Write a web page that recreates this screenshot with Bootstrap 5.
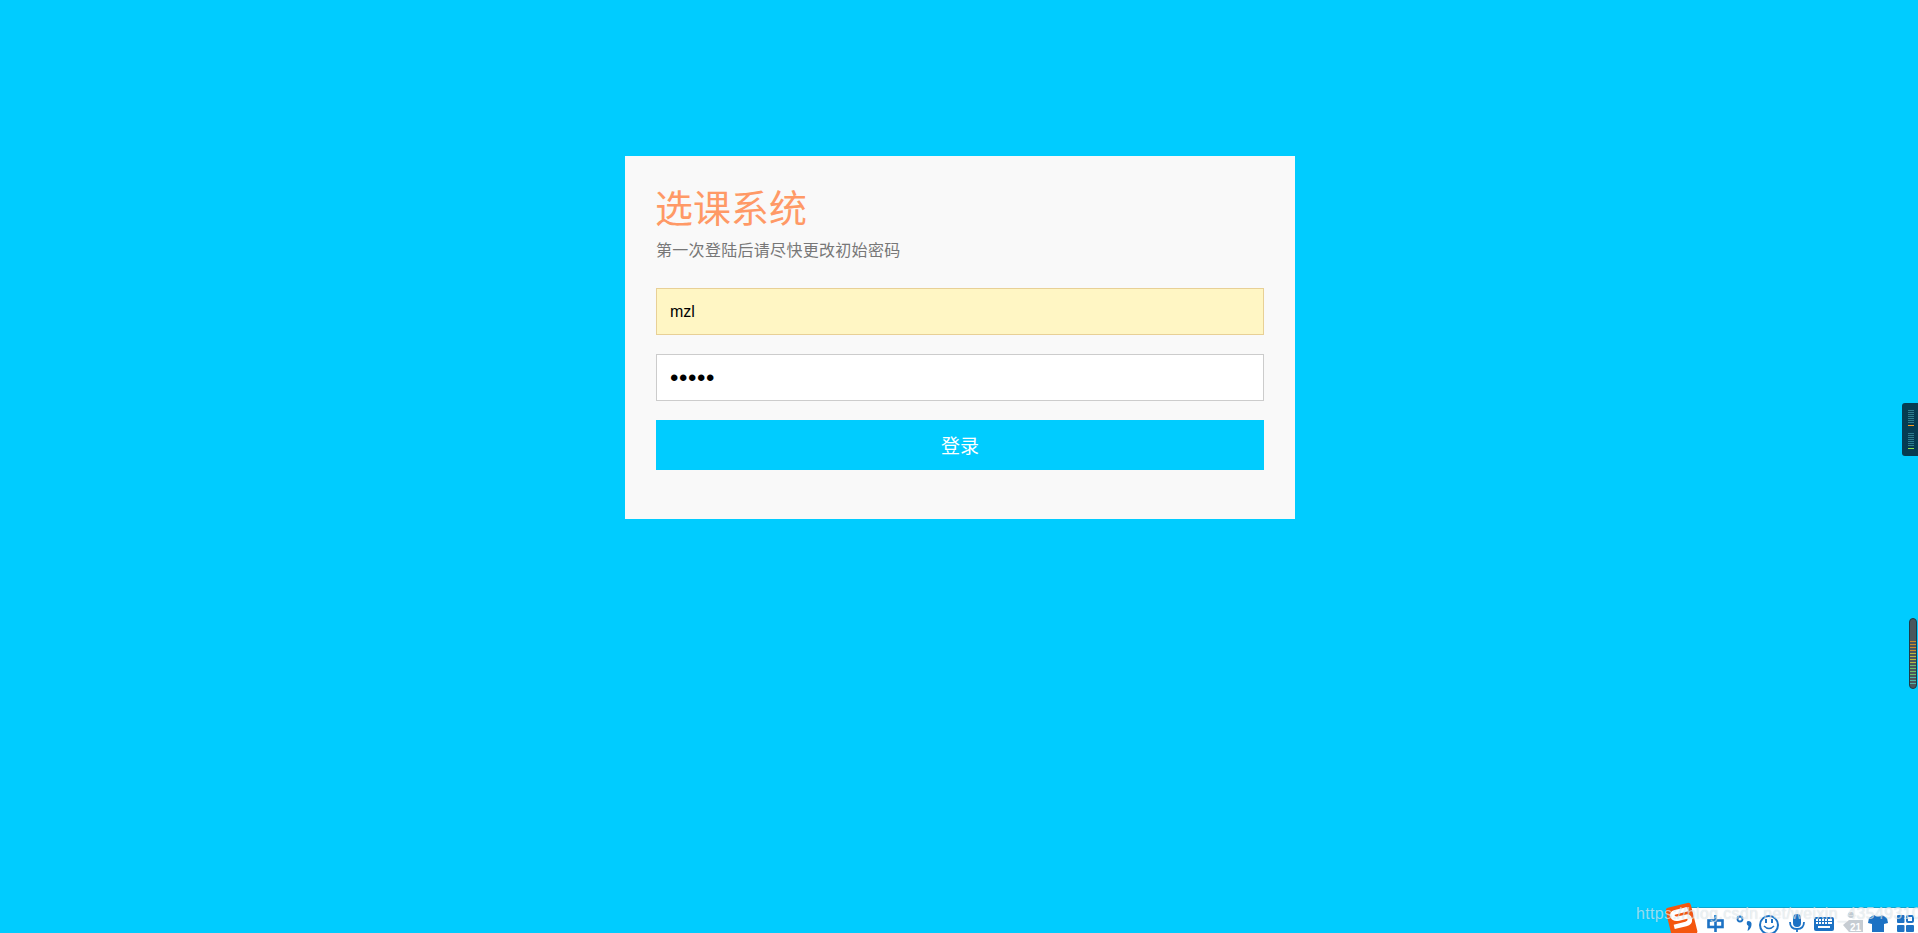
<!DOCTYPE html>
<html lang="zh-CN">
<head>
    <meta charset="UTF-8">
    <meta name="viewport" content="width=device-width, initial-scale=1.0">
    <title>选课系统</title>
    <link href="https://cdn.jsdelivr.net/npm/bootstrap@5.3.3/dist/css/bootstrap.min.css" rel="stylesheet">
    <style>
        html, body { height: 100%; }
        body {
            background: #00ccff;
            overflow: hidden;
            font-family: "Liberation Sans", "Noto Sans CJK SC", sans-serif;
        }
        .login-box {
            width: 670px;
            height: 363px;
            margin: 156px 0 0 625px;
            padding: 25px 31px 0;
            background: #f9f9f9;
        }
        .login-title {
            color: #ff9966;
            font-size: 38px;
            line-height: 50px;
            font-weight: 400;
            margin: 0 0 7px -1px;
            font-family: "Noto Sans CJK SC", sans-serif;
        }
        .login-sub {
            color: #777;
            font-size: 16px;
            line-height: 24px;
            letter-spacing: .3px;
            margin: -1px 0 27px;
            font-family: "Noto Sans CJK SC", sans-serif;
        }
        .login-input.form-control {
            height: 47px;
            padding: 0 13px;
            font-size: 16px;
            color: #000;
            border: 1px solid #ccc;
            border-radius: 0;
            background: #fff;
            margin-bottom: 19px;
        }
        .login-input.is-filled { background: #fff6c4; border-color: #e8d096; }
        .login-input.is-secret { font-size: 24px; letter-spacing: .6px; }
        .login-btn.btn {
            display: block;
            width: 100%;
            height: 50px;
            background: #00ccff;
            color: #fff;
            font-size: 19px;
            border: 0;
            border-radius: 0;
            font-family: "Noto Sans CJK SC", sans-serif;
        }
        /* desktop bits lying over the page */
        .side-meter {
            position: absolute;
            right: 0;
            top: 403px;
            width: 16px;
            height: 53px;
            background: #063c52;
            border-radius: 3px 0 0 3px;
        }
        .side-bar {
            position: absolute;
            right: 1px;
            top: 618px;
            width: 8px;
            height: 71px;
            background: #4a565c;
            border: 1px solid #1d3a48;
            border-radius: 4px;
        }
        .ime-bar {
            position: absolute;
            right: 0;
            bottom: 0;
            width: 228px;
            height: 26px;
            background: #fff;
            border-top: 1px solid #0ea5cf;
        }
        .ime-icons { position: absolute; right: 0; bottom: 0; }
        .watermark {
            position: absolute;
            left: 1636px;
            top: 902px;
            font-size: 16px;
            line-height: 24px;
            letter-spacing: .35px;
            color: rgba(255, 255, 255, .6);
            text-shadow: 0 0 1px rgba(0, 60, 90, .22);
            white-space: nowrap;
        }
    </style>
</head>
<body>

    <div class="login-box">
        <h1 class="login-title">选课系统</h1>
        <p class="login-sub">第一次登陆后请尽快更改初始密码</p>
        <form onsubmit="return false">
            <input type="text" class="form-control login-input is-filled" value="mzl">
            <input type="password" class="form-control login-input is-secret" value="12345">
            <button type="submit" class="btn login-btn">登录</button>
        </form>
    </div>

    <div class="side-meter">
        <svg class="d-block" width="16" height="53" viewBox="0 0 16 53">
            <g fill="#2f7d8f">
                <rect x="6" y="7" width="6" height="1"/><rect x="6" y="9" width="6" height="1"/>
                <rect x="6" y="11" width="6" height="1"/><rect x="6" y="13" width="6" height="1"/>
                <rect x="6" y="15" width="6" height="1"/><rect x="6" y="17" width="6" height="1"/>
                <rect x="6" y="19" width="6" height="1"/>
                <rect x="6" y="30" width="6" height="1"/><rect x="6" y="32" width="6" height="1"/>
                <rect x="6" y="34" width="6" height="1"/><rect x="6" y="36" width="6" height="1"/>
                <rect x="6" y="38" width="6" height="1"/><rect x="6" y="40" width="6" height="1"/>
                <rect x="6" y="42" width="6" height="1"/>
            </g>
            <rect x="6" y="22" width="6" height="1" fill="#ff9a1a"/>
            <rect x="6" y="45" width="6" height="1" fill="#8fe04a"/>
        </svg>
    </div>

    <div class="side-bar">
        <svg class="d-block" width="6" height="69" viewBox="0 0 6 69">
            <g fill="#c98a2e"><rect y="22" width="6" height="1"/><rect y="25" width="6" height="1"/><rect y="28" width="6" height="1"/><rect y="31" width="6" height="1"/></g>
            <g fill="#b8b840"><rect y="34" width="6" height="1"/><rect y="37" width="6" height="1"/><rect y="40" width="6" height="1"/><rect y="43" width="6" height="1"/></g>
            <g fill="#6fbf6a"><rect y="46" width="6" height="1"/><rect y="49" width="6" height="1"/><rect y="52" width="6" height="1"/><rect y="55" width="6" height="1"/></g>
            <g fill="#4fb3a8"><rect y="58" width="6" height="1"/><rect y="61" width="6" height="1"/><rect y="64" width="6" height="1"/></g>
        </svg>
    </div>

    <div class="ime-bar"></div>
    <svg class="ime-icons d-block" width="252" height="33" viewBox="1666 900 252 33">
        <!-- sogou logo -->
        <g transform="rotate(-14 1681 919)">
            <rect x="1668" y="905" width="26" height="32" rx="3" fill="#f4570f"/>
            <path d="M1690 911h-13q-4 0-3.500 3.500t5.500 3.500h7q4 0 3.500 3.500t-5 3.500h-12" fill="none" stroke="#fff" stroke-width="4.500"/>
        </g>
        <!-- 中 -->
        <g fill="none" stroke="#1d72c4" stroke-width="2.600">
            <rect x="1708.500" y="920.500" width="14" height="6.500"/>
            <path d="M1715.500 915v17"/>
        </g>
        <!-- punctuation -->
        <circle cx="1740" cy="919" r="2.500" fill="none" stroke="#1d72c4" stroke-width="1.800"/>
        <path d="M1748 921q4 0 3.500 4t-4 6l1-5q-2-1-1.800-3t1.300-2z" fill="#1d72c4"/>
        <!-- smiley -->
        <circle cx="1769" cy="925" r="9" fill="#fff" stroke="#1d72c4" stroke-width="2"/>
        <rect x="1765" y="919" width="2" height="4" fill="#1d72c4"/>
        <rect x="1771" y="919" width="2" height="4" fill="#1d72c4"/>
        <path d="M1764 926q5 5 10 0" fill="none" stroke="#1d72c4" stroke-width="1.600"/>
        <!-- mic -->
        <rect x="1793" y="914" width="8" height="13" rx="4" fill="#1d72c4"/>
        <path d="M1790 922q0 7 7 7t7-7M1797 929v3" fill="none" stroke="#1d72c4" stroke-width="1.800"/>
        <!-- keyboard -->
        <rect x="1814" y="917" width="20" height="14" rx="2" fill="#1d72c4"/>
        <g fill="#fff">
            <rect x="1816" y="919" width="2" height="2"/><rect x="1819" y="919" width="2" height="2"/><rect x="1822" y="919" width="2" height="2"/><rect x="1825" y="919" width="2" height="2"/><rect x="1828" y="919" width="4" height="2"/>
            <rect x="1816" y="922" width="2" height="2"/><rect x="1819" y="922" width="2" height="2"/><rect x="1822" y="922" width="2" height="2"/><rect x="1825" y="922" width="2" height="2"/><rect x="1828" y="922" width="4" height="2"/>
            <rect x="1818" y="926" width="12" height="2"/>
        </g>
        <!-- grey badge -->
        <circle cx="1851" cy="915" r="3" fill="#c6ccd2"/>
        <path d="M1843 925l6-5h14v12h-14z" fill="#c6ccd2"/>
        <text x="1850" y="931" font-family="Liberation Sans" font-size="10" font-weight="700" fill="#fff">21</text>
        <!-- shirt -->
        <path d="M1869 918l5-3q4 3 8 0l5 3 1 5-4 1v8h-12v-8l-4-1z" fill="#1d72c4"/>
        <!-- squares -->
        <rect x="1897" y="915" width="7.500" height="8" rx="1" fill="#1d72c4"/>
        <rect x="1907" y="916" width="6" height="6" rx="1" fill="#fff" stroke="#1d72c4" stroke-width="2"/>
        <rect x="1897" y="925" width="7.500" height="7" rx="1" fill="#1d72c4"/>
        <rect x="1906" y="925" width="8" height="7" rx="1" fill="#1d72c4"/>
    </svg>
    <div class="watermark">https://blog.csdn.net/weixin_43549310</div>

    <script src="https://cdn.jsdelivr.net/npm/bootstrap@5.3.3/dist/js/bootstrap.bundle.min.js"></script>
</body>
</html>
